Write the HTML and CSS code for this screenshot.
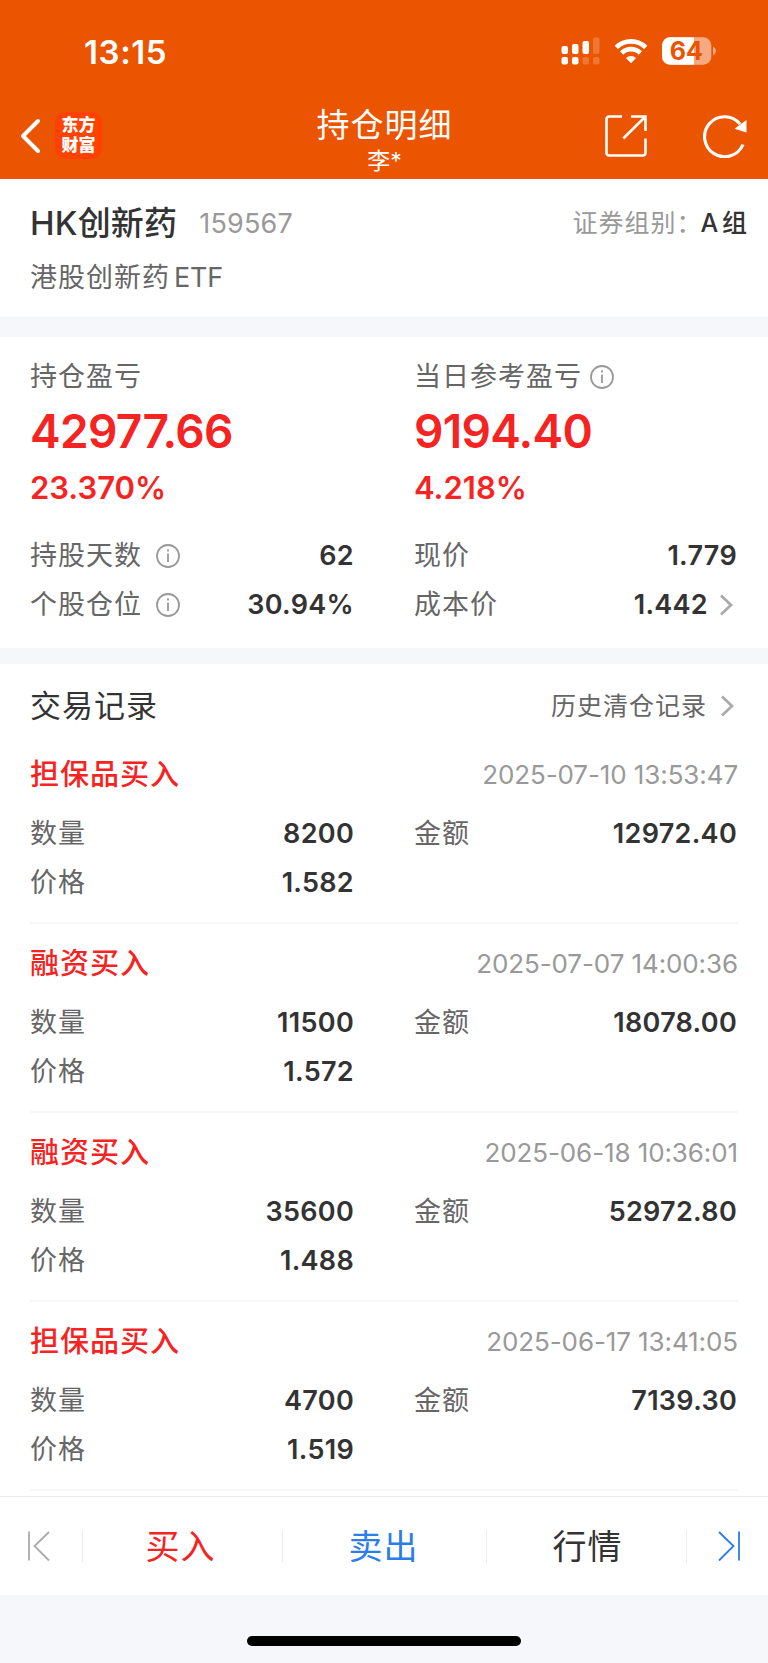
FILE: index.html
```html
<!DOCTYPE html>
<html lang="zh-CN">
<head>
<meta charset="UTF-8">
<meta name="viewport" content="width=device-width, initial-scale=1.0">
<title>持仓明细</title>
<link rel="stylesheet" href="styles.css">
</head>
<body>
  <header class="header">
    <div class="status-bar">
      <span class="time">13:15</span>
      <div class="status-icons">
        <svg class="signal" width="39" height="28" viewBox="0 0 39 28" fill="#fff">
          <rect x="0.5" y="9" width="6.5" height="8" rx="2"/>
          <rect x="11" y="7" width="6.5" height="10" rx="2"/>
          <rect x="21.5" y="4" width="6.5" height="13" rx="2"/>
          <rect x="32" y="0.5" width="6.5" height="16.5" rx="2" opacity="0.2"/>
          <rect x="0.5" y="20" width="6.5" height="7.5" rx="2"/>
          <rect x="11" y="20" width="6.5" height="7.5" rx="2"/>
          <rect x="21.5" y="20" width="6.5" height="7.5" rx="2" opacity="0.2"/>
          <rect x="32" y="20" width="6.5" height="7.5" rx="2" opacity="0.2"/>
        </svg>
        <svg class="wifi" width="34" height="28" viewBox="0 0 34 28" fill="none" stroke="#fff" stroke-width="4.6">
          <path d="M2.3 10.4a21 21 0 0 1 29.4 0"/>
          <path d="M7.6 16a13.4 13.4 0 0 1 18.8 0"/>
          <path d="M17 26.2l-5-5.2a7.2 7.2 0 0 1 10 0z" fill="#fff" stroke="none"/>
        </svg>
        <svg class="battery" width="55" height="28" viewBox="0 0 55 28">
          <rect x="0" y="0.3" width="49.3" height="27.4" rx="8" fill="#fff" opacity="0.5"/>
          <path d="M8 0.3H32V27.7H8a8 8 0 0 1-8-8V8.3a8 8 0 0 1 8-8z" fill="#fff"/>
          <path d="M51 9.8c3.8 1.2 3.8 7.2 0 8.4z" fill="#fff" opacity="0.5"/>
          <text x="24.3" y="23" class="battery-text">64</text>
        </svg>
      </div>
    </div>
    <nav class="nav-bar">
      <div class="nav-left">
        <svg width="20" height="36" viewBox="0 0 20 36" fill="none" stroke="#fff" stroke-width="4" stroke-linecap="round" stroke-linejoin="round">
          <path d="M18 3L3 18l15 15"/>
        </svg>
        <div class="logo"><span>东方</span><span>财富</span></div>
      </div>
      <div class="nav-title">
        <h1>持仓明细</h1>
        <p>李*</p>
      </div>
      <div class="nav-right">
        <svg width="42" height="42" viewBox="0 0 42 42" fill="none" stroke="#fff" stroke-width="2.6">
          <path d="M17 1.5H4a2.5 2.5 0 0 0-2.5 2.5v34a2.5 2.5 0 0 0 2.5 2.5h34a2.5 2.5 0 0 0 2.5-2.5V23.5"/>
          <path d="M26 1.5h14.5V16M40 2L18.3 23.5"/>
        </svg>
        <svg width="44" height="44" viewBox="0 0 44 44" fill="none" stroke="#fff" stroke-width="3.2">
          <path d="M40 30.5A20 20 0 1 1 37 10"/>
          <path d="M43.5 6v12.5L31.5 14.8z" fill="#fff" stroke="none"/>
        </svg>
      </div>
    </nav>
  </header>

  <section class="security">
    <div class="security-row">
      <div class="security-name"><h2>HK创新药</h2><span class="code">159567</span></div>
      <div class="group">证券组别：<b>A 组</b></div>
    </div>
    <p class="full-name">港股创新药<span class="latin">ETF</span></p>
  </section>

  <section class="profit">
    <div class="column">
      <div class="label profit-label">持仓盈亏</div>
      <div class="amount">42977.66</div>
      <div class="percent">23.370%</div>
      <div class="row">
        <span class="label">持股天数</span>
        <svg class="info" width="24" height="24" viewBox="0 0 24 24"><circle cx="12" cy="12" r="11"/><path d="M12 9.5V18"/><path d="M12 5.2v2.4"/></svg>
        <span class="value">62</span>
      </div>
      <div class="row">
        <span class="label">个股仓位</span>
        <svg class="info" width="24" height="24" viewBox="0 0 24 24"><circle cx="12" cy="12" r="11"/><path d="M12 9.5V18"/><path d="M12 5.2v2.4"/></svg>
        <span class="value">30.94%</span>
      </div>
    </div>
    <div class="column">
      <div class="label profit-label">当日参考盈亏
        <svg class="info" width="24" height="24" viewBox="0 0 24 24"><circle cx="12" cy="12" r="11"/><path d="M12 9.5V18"/><path d="M12 5.2v2.4"/></svg>
      </div>
      <div class="amount">9194.40</div>
      <div class="percent">4.218%</div>
      <div class="row">
        <span class="label">现价</span>
        <span class="value">1.779</span>
      </div>
      <div class="row">
        <span class="label">成本价</span>
        <span class="value">1.442</span>
        <svg class="arrow" width="14" height="22" viewBox="0 0 14 22"><path d="M2 1.5L12 11 2 20.5"/></svg>
      </div>
    </div>
  </section>

  <section class="trades">
    <div class="trades-head">
      <h3>交易记录</h3>
      <div class="history">历史清仓记录
        <svg class="arrow" width="14" height="22" viewBox="0 0 14 22"><path d="M2 1.5L12 11 2 20.5"/></svg>
      </div>
    </div>

    <div class="record">
      <div class="record-head"><span class="type">担保品买入</span><span class="date">2025-07-10 13:53:47</span></div>
      <div class="record-grid">
        <div class="row"><span class="label">数量</span><span class="value">8200</span></div>
        <div class="row"><span class="label">金额</span><span class="value">12972.40</span></div>
        <div class="row"><span class="label">价格</span><span class="value">1.582</span></div>
      </div>
    </div>
    <div class="record">
      <div class="record-head"><span class="type">融资买入</span><span class="date">2025-07-07 14:00:36</span></div>
      <div class="record-grid">
        <div class="row"><span class="label">数量</span><span class="value">11500</span></div>
        <div class="row"><span class="label">金额</span><span class="value">18078.00</span></div>
        <div class="row"><span class="label">价格</span><span class="value">1.572</span></div>
      </div>
    </div>
    <div class="record">
      <div class="record-head"><span class="type">融资买入</span><span class="date">2025-06-18 10:36:01</span></div>
      <div class="record-grid">
        <div class="row"><span class="label">数量</span><span class="value">35600</span></div>
        <div class="row"><span class="label">金额</span><span class="value">52972.80</span></div>
        <div class="row"><span class="label">价格</span><span class="value">1.488</span></div>
      </div>
    </div>
    <div class="record">
      <div class="record-head"><span class="type">担保品买入</span><span class="date">2025-06-17 13:41:05</span></div>
      <div class="record-grid">
        <div class="row"><span class="label">数量</span><span class="value">4700</span></div>
        <div class="row"><span class="label">金额</span><span class="value">7139.30</span></div>
        <div class="row"><span class="label">价格</span><span class="value">1.519</span></div>
      </div>
    </div>
  </section>

  <nav class="tab-bar">
    <div class="tab tab-prev">
      <svg class="prev" width="24" height="32" viewBox="0 0 24 32"><path d="M2 1.5v29M22 2L7.5 16 22 30.5"/></svg>
    </div>
    <div class="tab buy">买入</div>
    <div class="tab sell">卖出</div>
    <div class="tab quote">行情</div>
    <div class="tab tab-next">
      <svg class="next" width="24" height="32" viewBox="0 0 24 32"><path d="M22 1.5v29M2 2l14.5 14L2 30.5"/></svg>
    </div>
  </nav>
  <footer class="home-area"><div class="home-indicator"></div></footer>
</body>
</html>
```
FILE: styles.css
```css
* {
  box-sizing: border-box;
}
body {
  margin: 0;
  width: 768px;
  font-family: Inter, "Noto Sans CJK SC", sans-serif;
  background: #f6f7fa;
  color: #333;
}
h1, h2, h3, p {
  margin: 0;
  font-weight: 400;
}
svg {
  flex-shrink: 0;
}

/* header */
.header {
  height: 179px;
  background: #eb5502;
  color: #fff;
}
.status-bar {
  display: flex;
  justify-content: space-between;
  align-items: center;
  height: 94px;
  padding: 8px 51px 0 84px;
}
.time {
  padding-top: 1px;
  font-size: 33px;
  font-weight: 600;
  letter-spacing: 0.6px;
}
.status-icons {
  display: flex;
  align-items: center;
}
.wifi {
  margin: 0 14px;
}
.battery-text {
  font-size: 25px;
  font-weight: 700;
  text-anchor: middle;
  fill: #eb5502;
}
.nav-bar {
  display: grid;
  grid-template-columns: 1fr auto 1fr;
  height: 85px;
  padding: 0 21px 0 20px;
}
.nav-left {
  display: flex;
  align-items: center;
  gap: 15px;
  padding-bottom: 2px;
}
.logo {
  display: flex;
  flex-direction: column;
  align-items: center;
  justify-content: center;
  width: 47px;
  height: 47px;
  border-radius: 10px;
  background: #ff4200;
  font-size: 17px;
  line-height: 19.5px;
  font-weight: 900;
}
.nav-title {
  padding: 10px 0 0 2px;
  text-align: center;
}
.nav-title h1 {
  font-size: 33px;
  line-height: 43px;
  letter-spacing: 1px;
}
.nav-title p {
  font-size: 23px;
  line-height: 29px;
}
.nav-right {
  display: flex;
  justify-content: flex-end;
  align-items: center;
  gap: 56px;
  padding-bottom: 2px;
}

/* security */
.security {
  height: 138px;
  padding: 23px 20px 0 30px;
  background: #fff;
}
.security-row {
  display: flex;
  justify-content: space-between;
  line-height: 43px;
}
.security-name {
  display: flex;
  gap: 22px;
}
.security-name h2 {
  font-size: 33px;
  font-weight: 500;
  letter-spacing: 0.2px;
}
.code {
  font-size: 27px;
  letter-spacing: 0.2px;
  color: #999;
}
.group {
  font-size: 25px;
  letter-spacing: 1px;
  color: #999;
}
.group b {
  margin-left: -2px;
  font-weight: 500;
  word-spacing: -5px;
  color: #333;
}
.full-name {
  margin-top: 13px;
  font-size: 27px;
  line-height: 40px;
  letter-spacing: 1px;
  color: #666;
}
.latin {
  margin-left: 4px;
  letter-spacing: -0.2px;
}

/* profit */
.profit {
  display: grid;
  grid-template-columns: 324px 323px;
  column-gap: 60px;
  height: 311px;
  margin-top: 20px;
  padding: 20px 0 0 30px;
  background: #fff;
}
.label {
  font-size: 27px;
  letter-spacing: 1px;
  color: #666;
}
.profit-label {
  display: flex;
  align-items: center;
  gap: 8px;
  line-height: 40px;
}
.amount {
  font-size: 46px;
  font-weight: 600;
  line-height: 68px;
  letter-spacing: -0.7px;
  color: #f62323;
}
.percent {
  margin-bottom: 21px;
  font-size: 31px;
  font-weight: 600;
  line-height: 45px;
  color: #f62323;
}
.row {
  display: flex;
  align-items: center;
  height: 49px;
  line-height: 49px;
}
.row .info {
  margin-left: 14px;
}
.value {
  margin-left: auto;
  font-size: 27px;
  font-weight: 600;
  letter-spacing: 0.3px;
}
.info {
  fill: none;
  stroke: #999;
  stroke-width: 1.8;
}
.arrow {
  fill: none;
  stroke: #aaa;
  stroke-width: 2.8;
  margin-right: 4px;
}
.row .arrow {
  margin-left: 11px;
}

/* trades */
.trades {
  height: 832px;
  margin-top: 16px;
  padding: 0 30px;
  background: #fff;
}
.trades-head {
  display: flex;
  justify-content: space-between;
  align-items: center;
  height: 71px;
  padding-top: 12px;
  line-height: 50px;
}
.trades-head h3 {
  font-size: 31px;
  letter-spacing: 1px;
}
.history {
  display: flex;
  align-items: center;
  gap: 13px;
  font-size: 25px;
  letter-spacing: 1px;
  color: #666;
}
.record {
  height: 189px;
  padding-top: 15px;
  border-bottom: 2px solid #f7f7f7;
}
.record-head {
  display: flex;
  justify-content: space-between;
  margin-bottom: 9px;
  line-height: 50px;
}
.type {
  font-size: 29px;
  font-weight: 500;
  letter-spacing: 1px;
  color: #f62323;
}
.date {
  font-size: 26px;
  letter-spacing: -0.1px;
  color: #999;
}
.record-grid {
  display: grid;
  grid-template-columns: 324px 323px;
  column-gap: 60px;
}

/* bottom */
.tab-bar {
  display: grid;
  grid-template-columns: 83px 200px 204px 200px 81px;
  align-items: center;
  height: 99px;
  border-top: 1px solid #ededed;
  background: #fff;
}
.tab {
  display: flex;
  align-items: center;
  justify-content: center;
  height: 33px;
  border-right: 1px solid #ededed;
  font-size: 34px;
  line-height: 33px;
  letter-spacing: 1px;
}
.tab:last-child {
  border-right: none;
}
.tab svg {
  fill: none;
  stroke-width: 1.8;
}
.tab-prev {
  padding-right: 5px;
}
.tab-next {
  padding-left: 3px;
}
.prev {
  stroke: #aaa;
}
.next {
  stroke: #2b7de9;
}
.buy {
  padding-right: 4px;
  color: #f62323;
}
.sell {
  padding-right: 2px;
  color: #2b7de9;
}
.quote {
  padding-left: 2px;
}
.home-area {
  height: 68px;
  padding-top: 41px;
}
.home-indicator {
  width: 274px;
  height: 10px;
  margin: 0 auto;
  border-radius: 5px;
  background: #000;
}
```
